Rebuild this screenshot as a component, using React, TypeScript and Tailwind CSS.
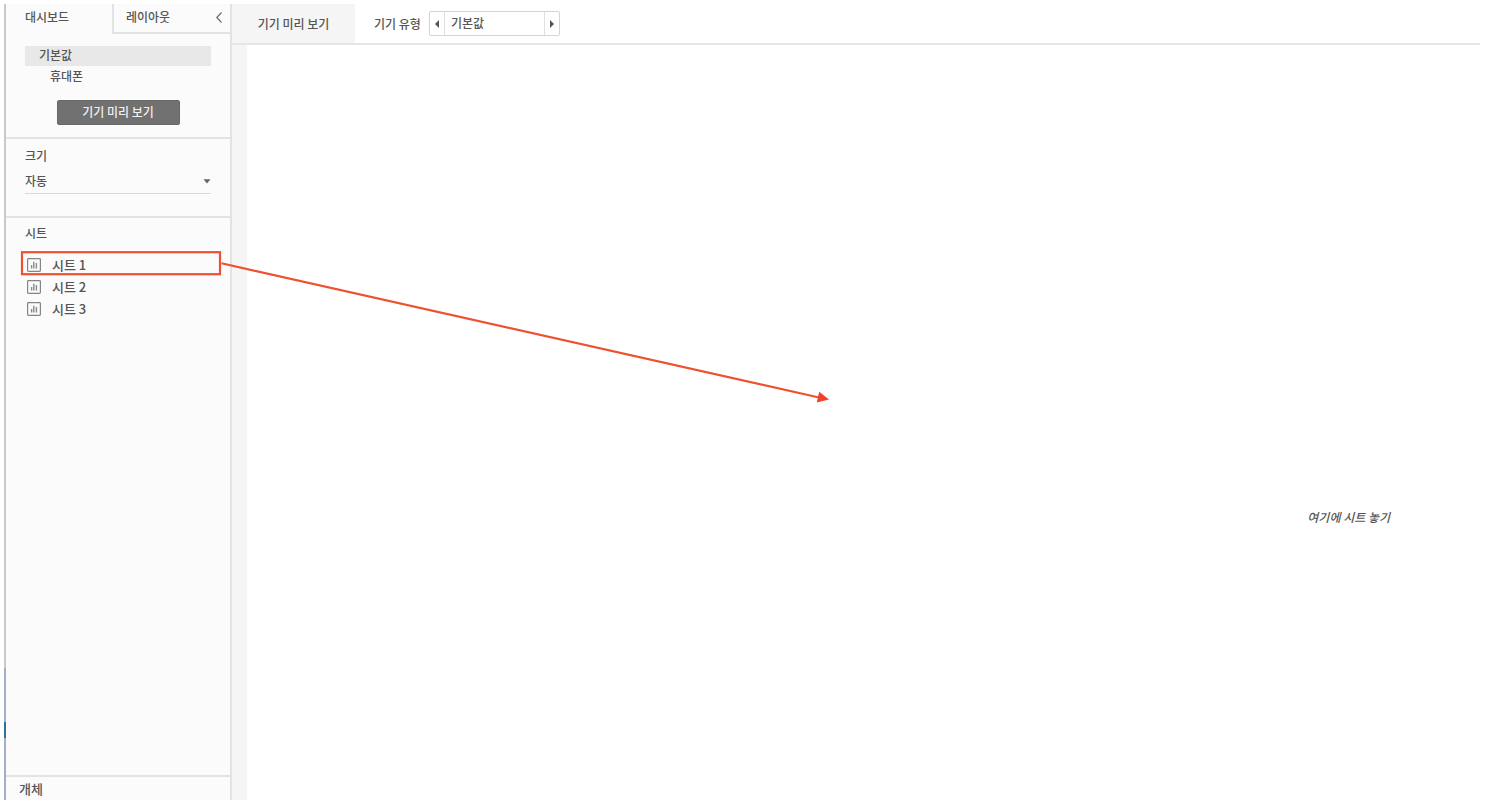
import { useState } from "react";

const devices = ["기본값", "휴대폰"];
const sheets = ["시트 1", "시트 2", "시트 3"];

function SheetIcon() {
  return (
    <svg width="14" height="14" viewBox="0 0 14 14" fill="none" aria-hidden="true">
      <rect x="0.6" y="0.6" width="12.8" height="12.8" rx="0.8" stroke="#858585" strokeWidth="1.2" />
      <path d="M4.6 7V10.5M6.8 3.8V10.5M9.4 5V10.5" stroke="#8a8a8a" strokeWidth="1.4" />
    </svg>
  );
}

// Drag hint: box around the first sheet and the arrow to the canvas
function DragHint() {
  return (
    <svg
      className="absolute top-0 left-0 pointer-events-none"
      width="840"
      height="420"
      viewBox="0 0 840 420"
      fill="none"
      aria-hidden="true"
    >
      <rect x="22" y="252.2" width="198" height="22" stroke="#ee5030" strokeWidth="2.2" />
      <path d="M221.5 263.3L819 397.5" stroke="#ee5030" strokeWidth="2.2" />
      <path d="M829 399.6L816.8 402.6L819.2 391.8Z" fill="#ee4328" />
    </svg>
  );
}

function Sidebar() {
  const [size, setSize] = useState("auto");

  return (
    <aside className="flex w-[226px] shrink-0 flex-col border-r-2 border-[#e3e3e3] bg-[#fbfbfb]">
      <div className="flex h-[30px] shrink-0">
        <button className="w-[106px] pb-1 pl-[19px] text-left">대시보드</button>
        <div className="flex flex-1 items-center justify-between border-b-2 border-l-2 border-[#e3e3e3] pr-2 pb-0.5 pl-3">
          <button>레이아웃</button>
          <button aria-label="접기">
            <svg width="6" height="11" viewBox="0 0 6 11" fill="none" aria-hidden="true">
              <path d="M5.5 0.5L0.8 5.5L5.5 10.5" stroke="#666" strokeWidth="1.1" />
            </svg>
          </button>
        </div>
      </div>

      <section className="flex flex-col border-b-2 border-[#e3e3e3] px-[19px] py-3">
        <button className="h-5 bg-[#e8e8e8] pb-0.5 pl-3.5 text-left">{devices[0]}</button>
        <button className="h-5 pl-[25px] text-left">{devices[1]}</button>
        <button className="mt-3.5 h-[25px] w-[123px] self-center rounded-[2px] border border-[#686868] bg-[#717171] pb-0.5 text-[#f0f0f0]">
          기기 미리 보기
        </button>
      </section>

      <section className="border-b-2 border-[#e3e3e3] px-[19px] pt-2 pb-[22px]">
        <label htmlFor="size" className="block h-4">
          크기
        </label>
        <div className="relative mt-1.5">
          <select
            id="size"
            value={size}
            onChange={(e) => setSize(e.target.value)}
            className="h-[25px] w-full appearance-none border-b border-[#d9d9d9] bg-transparent outline-none"
          >
            <option value="auto">자동</option>
            <option value="fixed">고정</option>
          </select>
          <svg className="pointer-events-none absolute top-2.5 right-0" width="8" height="5" viewBox="0 0 8 5" aria-hidden="true">
            <path d="M0.5 0.3H7.5L4 4.6Z" fill="#666" />
          </svg>
        </div>
      </section>

      <section className="flex-1 px-[19px] pt-1.5">
        <h2>시트</h2>
        <ul className="mt-3 text-[13px]">
          {sheets.map((name) => (
            <li key={name}>
              <button className="flex h-[22px] w-full items-center gap-[11px] pl-0.5">
                <SheetIcon />
                {name}
              </button>
            </li>
          ))}
        </ul>
      </section>

      <section className="border-t-2 border-[#e3e3e3] pt-[3px] pb-0.5 pl-[13px] text-[13px]">
        <h2>개체</h2>
      </section>
    </aside>
  );
}

function Toolbar() {
  const [index, setIndex] = useState(0);
  const step = (n: number) => setIndex((index + n + devices.length) % devices.length);

  return (
    <header className="flex h-[41px] shrink-0 items-stretch border-b-2 border-[#e6e6e6]">
      <button className="w-[123px] bg-[#f5f5f5]">기기 미리 보기</button>
      <div className="flex items-center pl-[19px]">
        <label htmlFor="device">기기 유형</label>
        <div className="ml-2 flex h-[25px] w-[131px] rounded-[2px] border border-[#d4d4d4] bg-white">
          <button aria-label="이전" onClick={() => step(-1)} className="flex w-[14px] items-center justify-center">
            <svg width="4" height="8" viewBox="0 0 4 8" aria-hidden="true">
              <path d="M4 0V8L0 4Z" fill="#555" />
            </svg>
          </button>
          <input
            id="device"
            readOnly
            value={devices[index]}
            className="min-w-0 flex-1 border-x border-[#e0e0e0] pb-0.5 pl-1.5 outline-none"
          />
          <button aria-label="다음" onClick={() => step(1)} className="flex w-[14px] items-center justify-center">
            <svg width="4" height="8" viewBox="0 0 4 8" aria-hidden="true">
              <path d="M0 0V8L4 4Z" fill="#555" />
            </svg>
          </button>
        </div>
      </div>
    </header>
  );
}

export default function App() {
  return (
    <div className="relative flex h-screen overflow-hidden bg-white pt-1 pr-1.5 pb-0.5 pl-1 font-['Noto_Sans_CJK_KR',sans-serif] text-[12px] leading-[18px] font-medium text-[#555]">
      <div className="flex w-0.5 shrink-0 flex-col bg-[#c9c9cb]">
        <div className="flex-1" />
        <div className="h-[54px] bg-[#a3afc3]" />
        <div className="h-4 bg-[#2f7398]" />
        <div className="h-[62px] bg-[#a3afc3]" />
      </div>
      <Sidebar />
      <div className="flex min-w-0 flex-1 flex-col">
        <Toolbar />
        <main className="flex flex-1 justify-end border-l-[15px] border-[#f5f5f5] pt-[463px] pr-[90px]">
          <p className="italic">여기에 시트 놓기</p>
        </main>
      </div>
      <DragHint />
    </div>
  );
}
